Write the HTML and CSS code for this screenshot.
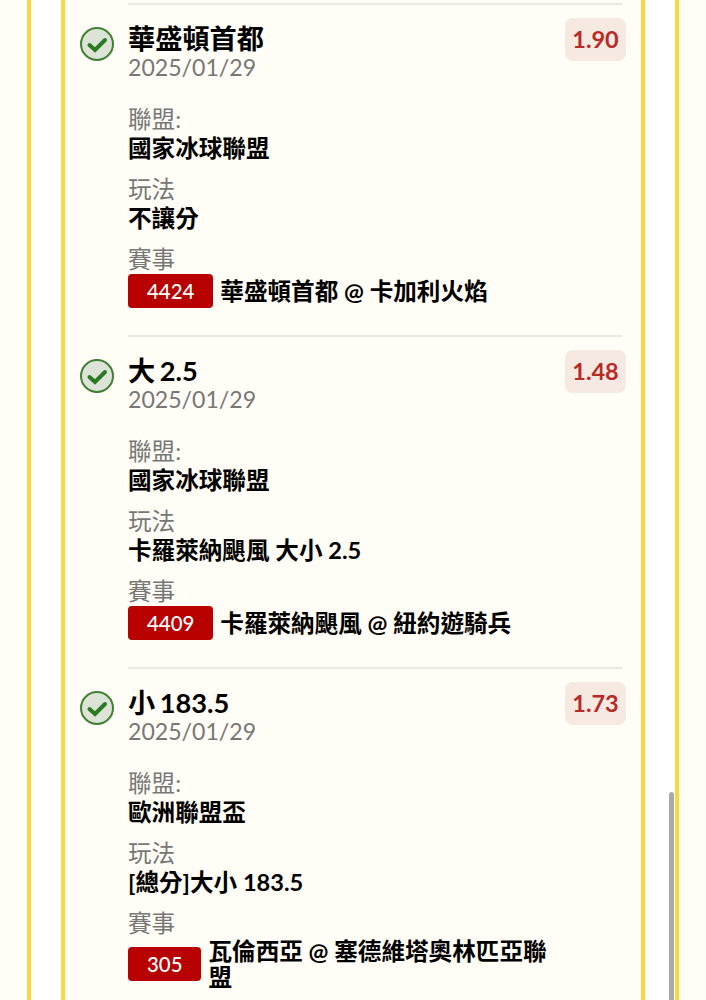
FILE: index.html
```html
<!DOCTYPE html>
<html lang="zh-Hant">
<head>
  <meta charset="UTF-8">
  <meta name="viewport" content="width=device-width, initial-scale=1.0">
  <title>投注紀錄</title>
  <link rel="stylesheet" href="styles.css">
</head>
<body>
  <div class="frame">
    <section class="slip">

      <!-- ITEM 1 -->
      <article class="bet">
        <svg class="bet-icon" viewBox="0 0 34 34" aria-hidden="true">
          <circle cx="17" cy="17" r="16" fill="#dde3d6" stroke="#3f8032" stroke-width="2"/>
          <path d="M9.5 18l5.5 5L25 13" fill="none" stroke="#2b7a22" stroke-width="4" stroke-linecap="round"/>
        </svg>
        <div class="bet-body">
          <div class="bet-head">
            <div class="bet-info">
              <h3 class="bet-title">華盛頓首都</h3>
              <p class="bet-date">2025/01/29</p>
            </div>
            <span class="odds">1.90</span>
          </div>
          <p class="label label-first">聯盟:</p>
          <p class="value">國家冰球聯盟</p>
          <p class="label">玩法</p>
          <p class="value">不讓分</p>
          <p class="label">賽事</p>
          <div class="match">
            <span class="match-no">4424</span>
            <span class="match-name">華盛頓首都 @ 卡加利火焰</span>
          </div>
        </div>
      </article>

      <!-- ITEM 2 -->
      <article class="bet">
        <svg class="bet-icon" viewBox="0 0 34 34" aria-hidden="true">
          <circle cx="17" cy="17" r="16" fill="#dde3d6" stroke="#3f8032" stroke-width="2"/>
          <path d="M9.5 18l5.5 5L25 13" fill="none" stroke="#2b7a22" stroke-width="4" stroke-linecap="round"/>
        </svg>
        <div class="bet-body">
          <div class="bet-head">
            <div class="bet-info">
              <h3 class="bet-title">大 2.5</h3>
              <p class="bet-date">2025/01/29</p>
            </div>
            <span class="odds">1.48</span>
          </div>
          <p class="label label-first">聯盟:</p>
          <p class="value">國家冰球聯盟</p>
          <p class="label">玩法</p>
          <p class="value">卡羅萊納颶風 大小 2.5</p>
          <p class="label">賽事</p>
          <div class="match">
            <span class="match-no">4409</span>
            <span class="match-name">卡羅萊納颶風 @ 紐約遊騎兵</span>
          </div>
        </div>
      </article>

      <!-- ITEM 3 -->
      <article class="bet">
        <svg class="bet-icon" viewBox="0 0 34 34" aria-hidden="true">
          <circle cx="17" cy="17" r="16" fill="#dde3d6" stroke="#3f8032" stroke-width="2"/>
          <path d="M9.5 18l5.5 5L25 13" fill="none" stroke="#2b7a22" stroke-width="4" stroke-linecap="round"/>
        </svg>
        <div class="bet-body">
          <div class="bet-head">
            <div class="bet-info">
              <h3 class="bet-title">小 183.5</h3>
              <p class="bet-date">2025/01/29</p>
            </div>
            <span class="odds">1.73</span>
          </div>
          <p class="label label-first">聯盟:</p>
          <p class="value">歐洲聯盟盃</p>
          <p class="label">玩法</p>
          <p class="value">[總分]大小 183.5</p>
          <p class="label">賽事</p>
          <div class="match">
            <span class="match-no">305</span>
            <span class="match-name">瓦倫西亞 @ 塞德維塔奧林匹亞聯盟</span>
          </div>
        </div>
      </article>

    </section>
  </div>
  <div class="scrollbar"></div>
</body>
</html>
```

FILE: styles.css
```css
* {
  margin: 0;
  padding: 0;
  box-sizing: border-box;
}
html, body {
  height: 1000px;
  overflow: hidden;
}
body {
  font-family: 'Lato', 'Noto Sans CJK TC', sans-serif;
  background-color: #fffdf5;
  color: #000;
  position: relative;
}
.frame {
  margin: 0 27px;
  height: 1000px;
  padding: 0 30px;
  background-color: #fff;
  border-left: 4px solid #fbd63d;
  border-right: 4px solid #fbd63d;
}
.slip {
  height: 1000px;
  padding: 3px 19px 0 63px;
  background-color: #fffdf5;
  border-left: 4px solid #fbd63d;
  border-right: 4px solid #fbd63d;
}
.bet {
  position: relative;
  height: 332px;
  padding-top: 13px;
  border-top: 2px solid #ebe8e0;
}
.bet-icon {
  position: absolute;
  left: -48px;
  top: 22px;
  width: 34px;
  height: 34px;
}
.bet-head {
  display: flex;
  justify-content: space-between;
  align-items: flex-start;
  margin-right: -4px;
}
.bet-info {
  padding-top: 6px;
}
.bet-title {
  font-size: 27.2px;
  line-height: 29px;
  font-weight: 700;
  word-spacing: -2px;
}
.bet-date {
  font-size: 23.1px;
  line-height: 28px;
  color: #777;
}
.odds {
  width: 61px;
  height: 43px;
  line-height: 43px;
  text-align: center;
  font-size: 23.5px;
  font-weight: 700;
  color: #b82b26;
  background-color: #f6e9e2;
  border-radius: 8px;
}
.label {
  margin-top: 12px;
  font-size: 23.6px;
  line-height: 30px;
  color: #777;
}
.label-first {
  margin-top: 23px;
}
.value {
  font-size: 23.6px;
  line-height: 28px;
  font-weight: 700;
}
.match {
  display: flex;
  align-items: center;
  gap: 7px;
  padding-right: 65px;
}
.match-no {
  flex: none;
  padding: 0 19px;
  height: 34px;
  line-height: 34px;
  font-size: 20.4px;
  font-weight: 500;
  color: #fff;
  background-color: #b80000;
  border-radius: 4px;
}
.match-name {
  font-size: 23.6px;
  line-height: 26px;
  font-weight: 700;
}
.scrollbar {
  position: absolute;
  left: 669px;
  top: 792px;
  width: 5px;
  height: 208px;
  background-color: #a9a9a9;
  border-radius: 3px 3px 0 0;
}
```
